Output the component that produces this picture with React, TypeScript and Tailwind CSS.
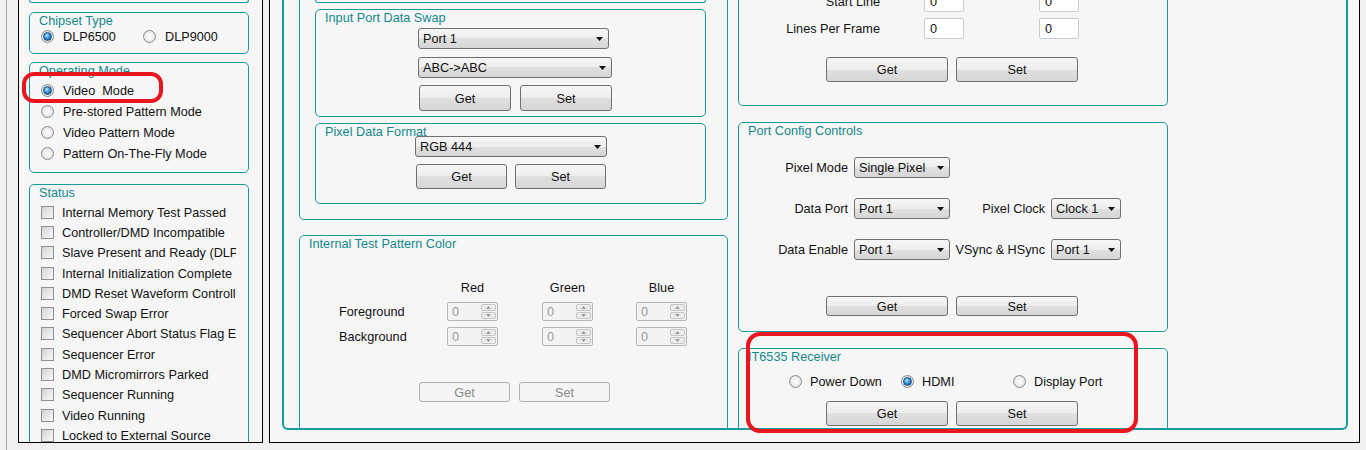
import type { ReactNode } from "react";

interface BoxProps {
  children?: ReactNode;
  className?: string;
  title: string;
}

// Win7-ish gradient used by combos and buttons
const chrome =
  "rounded-[3px] border border-[#707070] bg-[linear-gradient(#f6f6f6,#ededed_50%,#e0e0e0_50%,#d6d6d6)]";

const STATUS_ITEMS = [
  "Internal Memory Test Passed",
  "Controller/DMD Incompatible",
  "Slave Present and Ready (DLP9000 Only)",
  "Internal Initialization Complete",
  "DMD Reset Waveform Controller Error",
  "Forced Swap Error",
  "Sequencer Abort Status Flag Error",
  "Sequencer Error",
  "DMD Micromirrors Parked",
  "Sequencer Running",
  "Video Running",
  "Locked to External Source",
];

const MODES = [
  { label: "Video  Mode", checked: true },
  { label: "Pre-stored Pattern Mode", checked: false },
  { label: "Video Pattern Mode", checked: false },
  { label: "Pattern On-The-Fly Mode", checked: false },
];

function GroupBox({ children, className, title }: BoxProps): JSX.Element {
  return (
    <div className={`flow-root shrink-0 rounded-[5px] border border-[#169c9d] ${className ?? ""}`}>
      <div className="whitespace-nowrap pl-[9px] pt-px leading-[15px] text-[#13888d]">{title}</div>
      {children}
    </div>
  );
}

function Radio({ checked }: { checked?: boolean }): JSX.Element {
  return (
    <span className="flex h-[13px] w-[13px] shrink-0 items-center justify-center rounded-full border border-[#8a8b8b] bg-[radial-gradient(circle,#f7f7f7_30%,#d4d4d4)]">
      {checked ? (
        <span className="h-[9px] w-[9px] rounded-full border border-[#1d4f7d] bg-[radial-gradient(circle_at_40%_35%,#c6ecff,#3a9ae0_40%,#0d4479)]" />
      ) : null}
    </span>
  );
}

function Checkbox(): JSX.Element {
  return (
    <span className="h-[13px] w-[13px] shrink-0 border border-[#8e8f8f] bg-[linear-gradient(135deg,#d3d3d3,#f9f9f9)]" />
  );
}

function Arrow(): JSX.Element {
  return (
    <svg width="7" height="4" viewBox="0 0 7 4" className="shrink-0">
      <path d="M0 0h7L3.5 4z" fill="#111" />
    </svg>
  );
}

function Combo({ className, value }: { className: string; value: string }): JSX.Element {
  return (
    <div className={`flex h-[21px] shrink-0 items-center justify-between pl-[4px] pr-[5px] ${chrome} ${className}`}>
      <span className="whitespace-nowrap pt-[2px]">{value}</span>
      <Arrow />
    </div>
  );
}

function Button({ className, label }: { className: string; label: string }): JSX.Element {
  return (
    <div className={`flex shrink-0 items-center justify-center pt-[2px] ${chrome} ${className}`}>{label}</div>
  );
}

function DisabledButton({ label }: { label: string }): JSX.Element {
  return (
    <div className="flex h-[20px] w-[91px] items-center justify-center rounded-[3px] border border-[#adb2b5] bg-[#f4f4f4] pt-[2px] text-[#8a8a8a]">
      {label}
    </div>
  );
}

function TextInput({ className }: { className: string }): JSX.Element {
  return (
    <div className={`h-[21px] w-[40px] shrink-0 rounded-[2px] border border-[#c6ccd3] bg-white pl-[5px] pt-px leading-[19px] ${className}`}>
      0
    </div>
  );
}

function SpinBox({ className }: { className?: string }): JSX.Element {
  return (
    <div className={`flex h-[19px] w-[51px] shrink-0 items-center justify-between rounded-[2px] border border-[#b3b7ba] bg-[#f3f3f3] pl-[4px] pr-px text-[#9a9a9a] ${className ?? ""}`}>
      <span className="pt-[2px] leading-[15px]">0</span>
      <div className="flex h-[15px] w-[15px] flex-col gap-px">
        <div className="flex flex-1 items-center justify-center rounded-[2px] border border-[#c6c6c6] bg-[#ececec]">
          <svg width="5" height="3" viewBox="0 0 5 3">
            <path d="M0 3h5L2.5 0z" fill="#9c9c9c" />
          </svg>
        </div>
        <div className="flex flex-1 items-center justify-center rounded-[2px] border border-[#c6c6c6] bg-[#ececec]">
          <svg width="5" height="3" viewBox="0 0 5 3">
            <path d="M0 0h5L2.5 3z" fill="#9c9c9c" />
          </svg>
        </div>
      </div>
    </div>
  );
}

function LeftPanel(): JSX.Element {
  return (
    <div className="flow-root h-[443px] w-[245px] shrink-0 overflow-hidden border-x border-b border-black bg-[#f6f6f6] pl-[10px]">
      <div className="h-[3px] w-[220px] rounded-b-[5px] border-x border-b border-[#169c9d]" />

      <GroupBox className="mt-[9px] h-[42px] w-[220px]" title="Chipset Type">
        <div className="flex h-[15px] items-center pl-[11px]">
          <div className="flex w-[102px] items-center gap-[9px]">
            <Radio checked />
            <span className="pt-[2px]">DLP6500</span>
          </div>
          <div className="flex items-center gap-[9px]">
            <Radio />
            <span className="pt-[2px]">DLP9000</span>
          </div>
        </div>
      </GroupBox>

      <GroupBox className="mt-[8px] h-[111px] w-[220px]" title="Operating Mode">
        <div className="mt-px">
          {MODES.map((mode) => (
            <div key={mode.label} className="flex h-[21px] items-center gap-[9px] pl-[11px]">
              <Radio checked={mode.checked} />
              <span className="whitespace-pre pt-[2px]">{mode.label}</span>
            </div>
          ))}
        </div>
      </GroupBox>

      <GroupBox className="mt-[11px] h-[300px] w-[220px]" title="Status">
        <div className="mt-px">
          {STATUS_ITEMS.map((item) => (
            <div key={item} className="flex h-[20.3px] items-center gap-[8px] pl-[11px]">
              <Checkbox />
              <span className="w-[174px] overflow-hidden whitespace-nowrap pt-[2px]">{item}</span>
            </div>
          ))}
        </div>
      </GroupBox>
    </div>
  );
}

function MiddleColumn(): JSX.Element {
  return (
    <div className="w-[429px] shrink-0">
      <div className="flow-root h-[220px] rounded-b-[5px] border-x border-b border-[#169c9d] pl-[15px]">
        <div className="h-[3px] w-[391px] rounded-b-[5px] border-x border-b border-[#169c9d]" />

        <GroupBox className="mt-[6px] h-[108px] w-[391px]" title="Input Port Data Swap">
          <Combo className="ml-[102px] mt-[2px] w-[191px]" value="Port 1" />
          <Combo className="ml-[102px] mt-[8px] w-[194px]" value="ABC->ABC" />
          <div className="ml-[103px] mt-[7px] flex gap-[9px]">
            <Button className="h-[26px] w-[92px]" label="Get" />
            <Button className="h-[26px] w-[92px]" label="Set" />
          </div>
        </GroupBox>

        <GroupBox className="mt-[6px] h-[81px] w-[391px]" title="Pixel Data Format">
          <Combo className="-mt-[4px] ml-[99px] w-[192px]" value="RGB 444" />
          <div className="ml-[100px] mt-[7px] flex gap-[8px]">
            <Button className="h-[25px] w-[91px]" label="Get" />
            <Button className="h-[25px] w-[91px]" label="Set" />
          </div>
        </GroupBox>
      </div>

      <GroupBox className="mt-[15px] h-[220px] w-[429px]" title="Internal Test Pattern Color">
        <div className="mt-[29px] flex h-[15px] pl-[147px]">
          <span className="w-[51px] text-center">Red</span>
          <span className="ml-[44px] w-[51px] text-center">Green</span>
          <span className="ml-[43px] w-[51px] text-center">Blue</span>
        </div>
        <div className="mt-[6px] flex items-center pl-[39px]">
          <span className="w-[108px] pt-[2px]">Foreground</span>
          <SpinBox />
          <SpinBox className="ml-[44px]" />
          <SpinBox className="ml-[43px]" />
        </div>
        <div className="mt-[6px] flex items-center pl-[39px]">
          <span className="w-[108px] pt-[2px]">Background</span>
          <SpinBox />
          <SpinBox className="ml-[44px]" />
          <SpinBox className="ml-[43px]" />
        </div>
        <div className="mt-[36px] flex gap-[9px] pl-[119px]">
          <DisabledButton label="Get" />
          <DisabledButton label="Set" />
        </div>
      </GroupBox>
    </div>
  );
}

function ConfigRow({
  className,
  first,
  firstValue,
  second,
  secondValue,
}: {
  className: string;
  first: string;
  firstValue: string;
  second?: string;
  secondValue?: string;
}): JSX.Element {
  return (
    <div className={`flex h-[21px] items-center ${className}`}>
      <span className="w-[109px] pt-[2px] text-right">{first}</span>
      <Combo className="ml-[6px] w-[96px]" value={firstValue} />
      {second && secondValue ? (
        <>
          <span className="w-[95px] whitespace-nowrap pt-[2px] text-right">{second}</span>
          <Combo className="ml-[6px] w-[70px]" value={secondValue} />
        </>
      ) : null}
    </div>
  );
}

function RightColumn(): JSX.Element {
  return (
    <div className="ml-[10px] w-[430px] shrink-0">
      <div className="flow-root h-[106px] rounded-b-[5px] border-x border-b border-[#169c9d]">
        <div className="-mt-[9px] flex h-[21px] items-center">
          <span className="w-[141px] pt-[2px] text-right">Start Line</span>
          <TextInput className="ml-[44px]" />
          <TextInput className="ml-[75px]" />
        </div>
        <div className="mt-[6px] flex h-[21px] items-center">
          <span className="w-[141px] pt-[2px] text-right">Lines Per Frame</span>
          <TextInput className="ml-[44px]" />
          <TextInput className="ml-[75px]" />
        </div>
        <div className="mt-[18px] flex gap-[8px] pl-[87px]">
          <Button className="h-[25px] w-[122px]" label="Get" />
          <Button className="h-[25px] w-[122px]" label="Set" />
        </div>
      </div>

      <GroupBox className="mt-[16px] h-[210px] w-[430px]" title="Port Config Controls">
        <ConfigRow className="mt-[18px]" first="Pixel Mode" firstValue="Single Pixel" />
        <ConfigRow
          className="mt-[20px]"
          first="Data Port"
          firstValue="Port 1"
          second="Pixel Clock"
          secondValue="Clock 1"
        />
        <ConfigRow
          className="mt-[20px]"
          first="Data Enable"
          firstValue="Port 1"
          second="VSync & HSync"
          secondValue="Port 1"
        />
        <div className="mt-[36px] flex gap-[8px] pl-[87px]">
          <Button className="h-[20px] w-[122px]" label="Get" />
          <Button className="h-[20px] w-[122px]" label="Set" />
        </div>
      </GroupBox>

      <GroupBox className="mt-[16px] h-[120px] w-[430px]" title="IT6535 Receiver">
        <div className="mt-[9px] flex h-[15px] items-center pl-[50px]">
          <div className="flex w-[112px] items-center gap-[8px]">
            <Radio />
            <span className="pt-[2px]">Power Down</span>
          </div>
          <div className="flex w-[112px] items-center gap-[8px]">
            <Radio checked />
            <span className="pt-[2px]">HDMI</span>
          </div>
          <div className="flex items-center gap-[8px]">
            <Radio />
            <span className="pt-[2px]">Display Port</span>
          </div>
        </div>
        <div className="mt-[12px] flex gap-[8px] pl-[87px]">
          <Button className="h-[25px] w-[122px]" label="Get" />
          <Button className="h-[25px] w-[122px]" label="Set" />
        </div>
      </GroupBox>
    </div>
  );
}

export default function App(): JSX.Element {
  return (
    <div className="relative flex h-[450px] w-[1366px] overflow-hidden bg-[#f0f0f0] font-['Liberation_Sans',Arial,sans-serif] text-[12.7px] leading-[15px] text-[#111]">
      <div className="ml-[6px] h-full w-px shrink-0 bg-[#a6a6a6]" />
      <div className="ml-[11px]">
        <LeftPanel />
      </div>

      <div className="ml-[6px] h-[443px] w-[1091px] shrink-0 border-x border-b border-black bg-[#f6f6f6] pl-[12px]">
        <div className="flex h-[430px] w-[1066px] overflow-hidden rounded-b-[6px] border-x-2 border-b-2 border-[#169c9d] pl-[15px]">
          <MiddleColumn />
          <RightColumn />
        </div>
      </div>

      {/* red annotation marks */}
      <div className="absolute left-[22px] top-[72px] h-[31px] w-[141px] rounded-[12px] border-[4px] border-[#e8161e]" />
      <div className="absolute left-[746px] top-[332px] h-[101px] w-[392px] rounded-[14px] border-[4px] border-[#e8161e]" />
    </div>
  );
}
